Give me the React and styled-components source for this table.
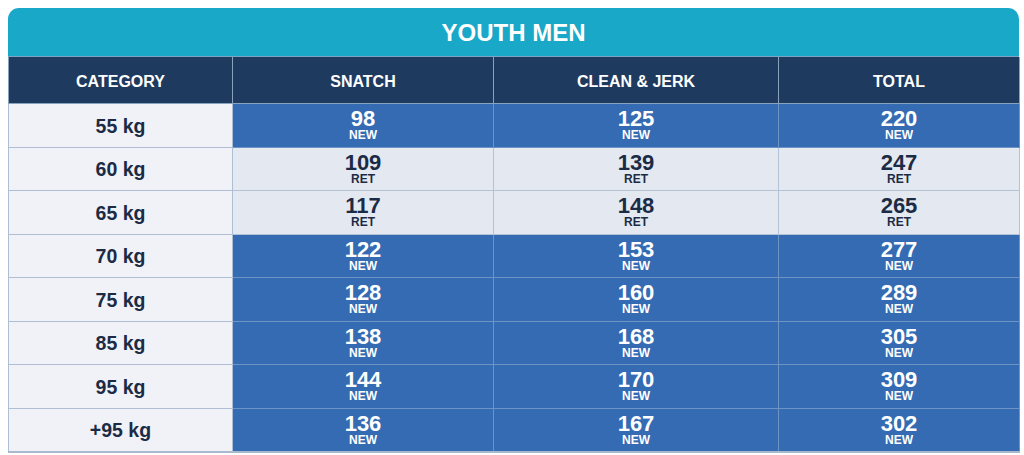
import React from "react";
import styled, { createGlobalStyle } from "styled-components";

const Global = createGlobalStyle`
  html, body { margin: 0; padding: 0; background: #ffffff; }
  body { font-family: "Liberation Sans", Arial, sans-serif; }
`;

const Wrap = styled.div`
  padding: 8px 5px 0 8px;
`;

const Card = styled.div`
  width: 1011px;
`;

const TitleBar = styled.div`
  height: 49px;
  background: #19a8c8;
  border-radius: 11px 11px 0 0;
  display: flex;
  align-items: center;
  justify-content: center;
  color: #ffffff;
  font-weight: 700;
  font-size: 24px;
  padding-top: 2px;
  box-sizing: border-box;
  border-bottom: 1px solid #7fa4c2;
`;

const Table = styled.table`
  width: 1011px;
  border-collapse: collapse;
  table-layout: fixed;
  border-left: 1px solid #a9bbd1;
  border-right: 1px solid #a9bbd1;
  border-bottom: 2px solid #a9b9cd;
`;

const HeadCell = styled.th`
  height: 42px;
  padding: 4px 0 0;
  background: #1e3b5f;
  color: #ffffff;
  font-size: 16px;
  font-weight: 700;
  text-align: center;
  vertical-align: middle;
  border: 1px solid #8aa3bd;
  border-top: none;
`;

const Row = styled.tr`
  height: 43.5px;
`;

const CatCell = styled.td`
  padding: 2px 0 0;
  background: #f0f2f7;
  color: #1c2b45;
  font-size: 19.5px;
  font-weight: 700;
  text-align: center;
  vertical-align: middle;
  border: 1px solid #aebfd3;
`;

const ValueCell = styled.td`
  padding: 0;
  text-align: center;
  vertical-align: middle;
  background: ${(p) => (p.$ret ? "#e4e9f1" : "#346bb3")};
  color: ${(p) => (p.$ret ? "#1c2b45" : "#ffffff")};
  border: 1px solid ${(p) => (p.$ret ? "#b3c3d6" : "#6e94c6")};
`;

const Value = styled.div`
  font-size: 22px;
  font-weight: 700;
  line-height: 20px;
`;

const Tag = styled.div`
  font-size: 12px;
  font-weight: 700;
  line-height: 12px;
`;

const rows = [
  ["55 kg", "98", "125", "220", false],
  ["60 kg", "109", "139", "247", true],
  ["65 kg", "117", "148", "265", true],
  ["70 kg", "122", "153", "277", false],
  ["75 kg", "128", "160", "289", false],
  ["85 kg", "138", "168", "305", false],
  ["95 kg", "144", "170", "309", false],
  ["+95 kg", "136", "167", "302", false],
];

function Cell({ value, ret }) {
  return (
    <ValueCell $ret={ret}>
      <Value>{value}</Value>
      <Tag>{ret ? "RET" : "NEW"}</Tag>
    </ValueCell>
  );
}

export default function App() {
  return (
    <>
      <Global />
      <Wrap>
        <Card>
          <TitleBar>YOUTH MEN</TitleBar>
          <Table>
            <colgroup>
              <col style={{ width: 224 }} />
              <col style={{ width: 261 }} />
              <col style={{ width: 285 }} />
              <col style={{ width: 241 }} />
            </colgroup>
            <thead>
              <tr>
                <HeadCell>CATEGORY</HeadCell>
                <HeadCell>SNATCH</HeadCell>
                <HeadCell>CLEAN &amp; JERK</HeadCell>
                <HeadCell>TOTAL</HeadCell>
              </tr>
            </thead>
            <tbody>
              {rows.map(([cat, s, cj, t, ret]) => (
                <Row key={cat}>
                  <CatCell>{cat}</CatCell>
                  <Cell value={s} ret={ret} />
                  <Cell value={cj} ret={ret} />
                  <Cell value={t} ret={ret} />
                </Row>
              ))}
            </tbody>
          </Table>
        </Card>
      </Wrap>
    </>
  );
}
